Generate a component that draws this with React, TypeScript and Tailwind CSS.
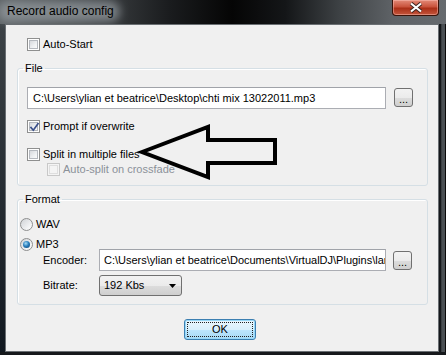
import React from "react";

function CheckBox({ checked, disabled }: { checked?: boolean; disabled?: boolean }) {
  return (
    <span
      className={`relative flex h-[13px] w-[13px] shrink-0 items-center justify-center border ${
        disabled ? "border-[#c8c8c8] bg-[#f4f4f4]" : "border-[#8e8f8f] bg-white"
      }`}
    >
      <span
        className={`h-[9px] w-[9px] border ${
          disabled
            ? "border-[#dedede] bg-[#f4f4f4]"
            : "border-[#b4b8be] bg-[linear-gradient(135deg,#d6d8dc_0%,#eef0f2_60%,#fafafa_100%)]"
        }`}
      />
      {checked && (
        <svg className="absolute left-[1px] top-[1px]" width="11" height="11" viewBox="0 0 11 11" fill="none">
          <path d="M2 5.5 L4.3 8.2 L9 1.8" stroke="#3a4f8a" strokeWidth="1.7" strokeLinecap="square" />
        </svg>
      )}
    </span>
  );
}

function Radio({ checked }: { checked?: boolean }) {
  return (
    <span className="flex h-[13px] w-[13px] shrink-0 items-center justify-center rounded-full border border-[#8e8f8f] bg-[linear-gradient(135deg,#cfd2d6_0%,#f2f3f4_70%,#ffffff_100%)]">
      {checked && (
        <span className="h-[7px] w-[7px] rounded-full bg-[radial-gradient(circle_at_40%_35%,#a6dcf6_0%,#2a7fbd_45%,#0b3d6c_100%)]" />
      )}
    </span>
  );
}

function BrowseButton() {
  return (
    <button
      type="button"
      className="flex h-[19px] w-[19px] shrink-0 items-end justify-center overflow-hidden rounded-[3px] border border-[#707070] bg-[linear-gradient(180deg,#f2f2f2_0%,#ebebeb_50%,#dddddd_51%,#cfcfcf_100%)] pb-[1px] text-[11px] leading-[11px] text-black"
    >
      ...
    </button>
  );
}

export default function App() {
  return (
    <div className="flex h-[355px] w-[446px] flex-col overflow-hidden bg-[#121518] font-['Liberation_Sans',Arial,sans-serif] text-[11px] text-black">
      {/* barre de titre */}
      <div className="flex h-[24px] shrink-0 items-start justify-between bg-[linear-gradient(90deg,#5e6366_0%,#45494c_18%,#1a1c1e_38%,#050505_52%,#141618_64%,#3d4144_76%,#5e6266_88%,#666a6e_100%)]">
        <div className="relative ml-[4px] mt-[4px]">
          <span className="absolute -inset-x-[6px] -inset-y-[3px] rounded-[10px] bg-[#9aa1a6] opacity-70 blur-[5px]" />
          <span className="relative block pl-[3px] text-[12px] leading-[15px]">Record audio config</span>
        </div>
        <button
          type="button"
          className="mr-[7px] flex h-[16px] w-[47px] items-center justify-center rounded-b-[4px] border border-t-0 border-[#3a1208] bg-[linear-gradient(180deg,#e38a78_0%,#c9533c_45%,#aa2f17_55%,#c4563c_100%)] shadow-[inset_0_0_0_1px_rgba(255,200,190,0.45)]"
        >
          <svg width="14" height="11" viewBox="0 0 14 11">
            <path d="M2 1.5 L12 9.5 M12 1.5 L2 9.5" stroke="#3b2420" strokeWidth="4" />
            <path d="M2 1.5 L12 9.5 M12 1.5 L2 9.5" stroke="#ffffff" strokeWidth="2.2" />
          </svg>
        </button>
      </div>

      <div className="flex h-[328px] shrink-0">
        <div className="w-[5px] shrink-0 bg-[linear-gradient(180deg,#3c4246_0%,#111820_100%)]" />

        {/* zone client */}
        <div className="relative flex w-[434px] shrink-0 flex-col border border-[#6a6f73] bg-[#f0f0f0]">
          <label className="ml-[21px] mt-[13px] flex h-[13px] items-center gap-[3px] leading-[13px]">
            <CheckBox />
            <span>Auto-Start</span>
          </label>

          <fieldset className="ml-[11px] mt-[10px] w-[411px] rounded-[3px] border border-[#d5dfe5] p-0 shadow-[inset_1px_1px_0_#ffffff]">
            <legend className="ml-[5px] px-[2px] text-[11px] leading-[14px]">File</legend>
            <div className="flex flex-col pb-[9px] pl-[9px] pt-[12px]">
              <div className="flex items-start gap-[8px]">
                <div className="flex h-[22px] w-[359px] items-center overflow-hidden whitespace-nowrap border border-[#abadb3] border-t-[#a0a3a9] bg-white pl-[5px]">
                  C:\Users\ylian et beatrice\Desktop\chti mix 13022011.mp3
                </div>
                <div className="mt-[1px]">
                  <BrowseButton />
                </div>
              </div>
              <label className="mt-[11px] flex h-[13px] items-center gap-[3px] leading-[13px]">
                <CheckBox checked />
                <span>Prompt if overwrite</span>
              </label>
              <label className="mt-[15px] flex h-[13px] items-center gap-[3px] leading-[13px]">
                <CheckBox />
                <span>Split in multiple files</span>
              </label>
              <label className="ml-[20px] mt-[2px] flex h-[13px] items-center gap-[3px] leading-[13px] text-[#8b9199]">
                <CheckBox disabled />
                <span>Auto-split on crossfade</span>
              </label>
            </div>
          </fieldset>

          <fieldset className="ml-[11px] mt-[6px] w-[411px] rounded-[3px] border border-[#d5dfe5] p-0 shadow-[inset_1px_1px_0_#ffffff]">
            <legend className="ml-[5px] px-[2px] text-[11px] leading-[14px]">Format</legend>
            <div className="flex flex-col pb-[8px] pl-[2px] pt-[12px]">
              <label className="flex h-[13px] items-center gap-[3px] leading-[13px]">
                <Radio />
                <span>WAV</span>
              </label>
              <label className="mt-[7px] flex h-[13px] items-center gap-[3px] leading-[13px]">
                <Radio checked />
                <span>MP3</span>
              </label>
              <div className="-mt-[2px] flex h-[22px] items-center">
                <span className="ml-[23px] w-[56px]">Encoder:</span>
                <div className="h-[22px] w-[287px] overflow-hidden whitespace-nowrap border border-[#abadb3] border-t-[#a0a3a9] bg-white pl-[4px] leading-[20px]">
                  C:\Users\ylian et beatrice\Documents\VirtualDJ\Plugins\lame_enc.dll
                </div>
                <div className="ml-[7px]">
                  <BrowseButton />
                </div>
              </div>
              <div className="mt-[4px] flex h-[21px] items-center">
                <span className="ml-[23px] w-[56px]">Bitrate:</span>
                <div className="flex h-[21px] w-[83px] items-center justify-between rounded-[3px] border border-[#707070] bg-[linear-gradient(180deg,#f2f2f2_0%,#ebebeb_50%,#dddddd_51%,#cfcfcf_100%)] pl-[4px] pr-[5px]">
                  <span>192 Kbs</span>
                  <svg width="7" height="4" viewBox="0 0 7 4">
                    <path d="M0 0 H7 L3.5 4 Z" fill="#000" />
                  </svg>
                </div>
              </div>
            </div>
          </fieldset>

          <button
            type="button"
            className="relative ml-[178px] mt-[14px] flex h-[21px] w-[72px] items-center justify-center rounded-[3px] border border-[#3c7fb1] bg-[linear-gradient(180deg,#eaf6fd_0%,#d9f0fc_50%,#bee6fd_51%,#a7d9f5_100%)] text-[11px] shadow-[inset_0_0_0_1px_#97d8f8]"
          >
            <span className="absolute inset-[2px] border border-dotted border-[#222]" />
            OK
          </button>

          {/* flèche */}
          <svg className="absolute left-[130px] top-[95px]" width="146" height="62" viewBox="0 0 146 62" fill="none">
            <path
              d="M6 32 L72 7 L72 20 L139 20 L139 43 L72 43 L72 57 Z"
              stroke="#000"
              strokeWidth="4"
              strokeLinejoin="miter"
            />
          </svg>
        </div>

        <div className="w-[7px] shrink-0 bg-[linear-gradient(90deg,#15181b_0%,#15181b_25%,#4a4f53_40%,#4a4f53_80%,#0a0a0a_90%)]" />
      </div>

      <div className="h-[3px] shrink-0 bg-[#16191c]" />
    </div>
  );
}
